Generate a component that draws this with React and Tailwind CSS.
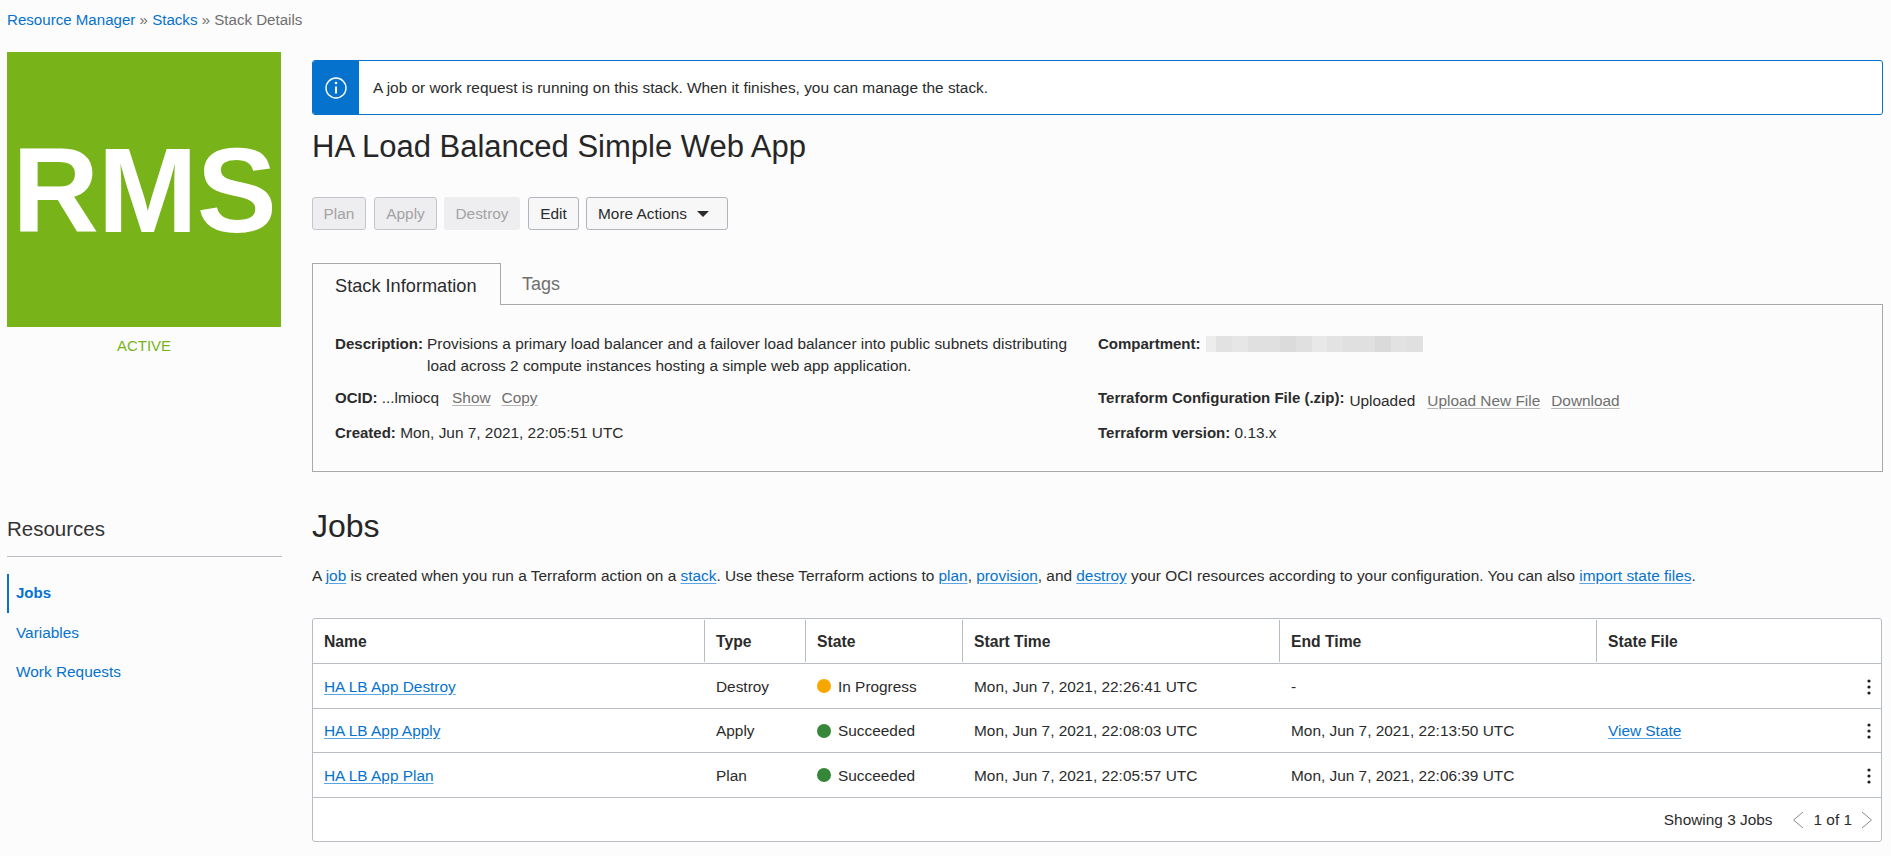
import React from 'react';

const link = 'text-[#0572ce] underline decoration-[#5aa5e4] underline-offset-2';
const muted = 'text-[#6f6f6f] underline decoration-[#b5b5b5] underline-offset-2';

const redacted = [
  'w-[10px] bg-[#ededed]', 'w-[16px] bg-[#e2e2e2]', 'w-[16px] bg-[#e6e6e6]', 'w-[16px] bg-[#e0e0e0]',
  'w-[16px] bg-[#e0e0e0]', 'w-[16px] bg-[#dbdbdb]', 'w-[16px] bg-[#e0e0e0]', 'w-[15px] bg-[#e8e8e8]',
  'w-[16px] bg-[#e3e3e3]', 'w-[16px] bg-[#e0e0e0]', 'w-[16px] bg-[#e0e0e0]', 'w-[16px] bg-[#dadada]',
  'w-[16px] bg-[#e2e2e2]', 'w-[16px] bg-[#e0e0e0]',
];

const jobs = [
  { name: 'HA LB App Destroy', type: 'Destroy', state: 'In Progress', dot: 'bg-[#f7a600]', start: 'Mon, Jun 7, 2021, 22:26:41 UTC', end: '-', h: 'h-[45px]' },
  { name: 'HA LB App Apply', type: 'Apply', state: 'Succeeded', dot: 'bg-[#36873a]', start: 'Mon, Jun 7, 2021, 22:08:03 UTC', end: 'Mon, Jun 7, 2021, 22:13:50 UTC', file: 'View State', h: 'h-[44px]' },
  { name: 'HA LB App Plan', type: 'Plan', state: 'Succeeded', dot: 'bg-[#36873a]', start: 'Mon, Jun 7, 2021, 22:05:57 UTC', end: 'Mon, Jun 7, 2021, 22:06:39 UTC', h: 'h-[45px]' },
];

const Kebab = () => (
  <svg width="4" height="16" viewBox="0 0 4 16" className="fill-[#1f1f1f]">
    <circle cx="2" cy="2" r="1.6" />
    <circle cx="2" cy="8" r="1.6" />
    <circle cx="2" cy="14" r="1.6" />
  </svg>
);

const Th = ({ children, first }) => (
  <th className="p-0 text-left font-bold text-[15.7px] align-middle">
    <div className={`h-[42px] flex items-center pl-[11px] pt-[3px] ${first ? '' : 'border-l border-[#b8bcc4]'}`}>{children}</div>
  </th>
);

export default function App() {
  return (
    <div className="min-h-[856px] bg-[#fcfcfc] text-[15.4px] text-[#2b2b2b] font-['Liberation_Sans',Arial,sans-serif] overflow-hidden">
      {/* breadcrumb */}
      <div className="h-[52px] pl-[7px] pt-[12px] leading-[16px] text-[15.1px] text-[#6f6f6f]">
        <span className="text-[#0572ce]">Resource Manager</span> » <span className="text-[#0572ce]">Stacks</span> » Stack Details
      </div>

      <div className="flex">
        {/* left column */}
        <div className="w-[312px] shrink-0 pl-[7px]">
          <div className="w-[274px] h-[275px] bg-[#77b319] flex items-center justify-center text-white font-bold text-[120px] leading-none tracking-[-1px]">RMS</div>
          <div className="w-[274px] text-center text-[#76b41a] text-[15px] mt-[11px] leading-[16px]">ACTIVE</div>

          <div className="mt-[163px] text-[20.5px] leading-[24px] text-[#333]">Resources</div>
          <div className="mt-[15px] h-px w-[275px] bg-[#b8bcc4]"></div>
          <div className="mt-[17px]">
            <div className="h-[39px] border-l-2 border-[#0572ce] pl-[7px] flex items-center font-bold text-[15px] text-[#0572ce]">Jobs</div>
            <div className="h-[40px] pl-[9px] flex items-center text-[#0572ce]">Variables</div>
            <div className="h-[38px] pl-[9px] flex items-center text-[#0572ce]">Work Requests</div>
          </div>
        </div>

        {/* main column */}
        <div className="w-[1571px] shrink-0">
          <div className="mt-[8px] h-[55px] flex border border-[#0572ce] rounded-[3px] bg-white">
            <div className="w-[46px] bg-[#0572ce] flex items-center justify-center rounded-l-[2px]">
              <svg width="22" height="22" viewBox="0 0 22 22" fill="none" stroke="white" strokeWidth="1.4">
                <circle cx="11" cy="11" r="10" />
                <path d="M11 9.5V16.5" strokeWidth="2" />
                <circle cx="11" cy="6" r="1.3" fill="white" stroke="none" />
              </svg>
            </div>
            <div className="flex items-center pl-[14px]">A job or work request is running on this stack. When it finishes, you can manage the stack.</div>
          </div>

          <h1 className="mt-[15px] text-[31px] leading-[34px] text-[#262626]">HA Load Balanced Simple Web App</h1>

          <div className="mt-[33px] flex items-center">
            <button className="h-[33px] w-[54px] pt-px rounded-[3px] border border-[#c2c5cb] bg-[#eeeef0] text-[#a3a3a3]">Plan</button>
            <button className="ml-[8px] h-[33px] w-[63px] pt-px rounded-[3px] border border-[#c2c5cb] bg-[#eeeef0] text-[#a3a3a3]">Apply</button>
            <button className="ml-[7px] h-[33px] w-[76px] pt-px rounded-[3px] bg-[#eeeef0] text-[#a3a3a3]">Destroy</button>
            <button className="ml-[8px] h-[33px] w-[51px] pt-px rounded-[3px] border border-[#b0b4bc] bg-[#f7f7f8] text-[#2b2b2b]">Edit</button>
            <button className="ml-[7px] h-[33px] w-[142px] pt-px pl-[11px] rounded-[3px] border border-[#b0b4bc] bg-[#f7f7f8] text-[#2b2b2b] flex items-center gap-[10px]">
              More Actions
              <span className="w-0 h-0 border-x-[6px] border-x-transparent border-t-[6px] border-t-[#2b2b2b]"></span>
            </button>
          </div>

          {/* tabs */}
          <div className="mt-[33px] flex items-end h-[41px]">
            <div className="w-[189px] h-[42px] border border-b-0 border-[#a8a8a8] bg-[#fcfcfc] flex items-center pl-[22px] pt-[5px] text-[18.2px] text-[#2b2b2b] relative z-10 top-px">Stack Information</div>
            <div className="pl-[21px] h-[41px] flex items-start pt-[8px] text-[18px] text-[#6f6f6f]">Tags</div>
          </div>
          <div className="w-[1571px] h-[168px] border border-[#a8a8a8] pl-[22px] pt-[28px] grid grid-cols-[763px_1fr] leading-[22px]">
            <div>
              <div className="flex">
                <b className="shrink-0 mr-[4px] text-[15.1px]">Description:</b>
                <span className="w-[650px]">Provisions a primary load balancer and a failover load balancer into public subnets distributing load across 2 compute instances hosting a simple web app application.</span>
              </div>
              <div className="mt-[10px]"><b className="text-[15px]">OCID:</b> ...lmiocq<a className={`ml-[13px] ${muted}`}>Show</a><a className={`ml-[11px] ${muted}`}>Copy</a></div>
              <div className="mt-[13px]"><b className="text-[15px]">Created:</b> Mon, Jun 7, 2021, 22:05:51 UTC</div>
            </div>
            <div>
              <div className="flex items-center h-[22px]">
                <b className="mr-[5px] text-[15px]">Compartment:</b>
                <div className="flex h-[16px]">
                  {redacted.map((c, i) => <div key={i} className={c}></div>)}
                </div>
              </div>
              <div className="mt-[32px] h-[22px] flex items-start">
                <b className="mr-[5px] text-[15px]">Terraform Configuration File (.zip):</b>
                <span className="mt-[3px]">Uploaded</span>
                <a className={`mt-[3px] ml-[12px] ${muted}`}>Upload New File</a>
                <a className={`mt-[3px] ml-[11px] ${muted}`}>Download</a>
              </div>
              <div className="mt-[13px]"><b className="text-[15px]">Terraform version:</b> 0.13.x</div>
            </div>
          </div>

          {/* jobs */}
          <h2 className="mt-[35px] text-[32px] leading-[38px] text-[#262626]">Jobs</h2>
          <p className="mt-[21px] leading-[20px] text-[#2b2b2b]">
            A <a className={link}>job</a> is created when you run a Terraform action on a <a className={link}>stack</a>. Use these Terraform actions to <a className={link}>plan</a>, <a className={link}>provision</a>, and <a className={link}>destroy</a> your OCI resources according to your configuration. You can also <a className={link}>import state files</a>.
          </p>

          <div className="mt-[32px] w-[1570px] border border-[#b8bcc4] rounded-[3px] bg-white">
            <table className="w-full table-fixed border-collapse">
              <colgroup>
                <col className="w-[391px]" />
                <col className="w-[101px]" />
                <col className="w-[157px]" />
                <col className="w-[317px]" />
                <col className="w-[317px]" />
                <col />
              </colgroup>
              <thead>
                <tr className="h-[44px] border-b border-[#b8bcc4]">
                  <Th first>Name</Th>
                  <Th>Type</Th>
                  <Th>State</Th>
                  <Th>Start Time</Th>
                  <Th>End Time</Th>
                  <Th>State File</Th>
                </tr>
              </thead>
              <tbody>
                {jobs.map(j => (
                  <tr key={j.name} className={`${j.h} border-b border-[#b8bcc4]`}>
                    <td className="pl-[11px] pt-[2px]"><a className={link}>{j.name}</a></td>
                    <td className="pl-[12px] pt-[2px]">{j.type}</td>
                    <td className="pl-[12px] pt-[2px]">
                      <span className="flex items-center gap-[7px]"><span className={`w-[14px] h-[14px] rounded-full ${j.dot}`}></span>{j.state}</span>
                    </td>
                    <td className="pl-[12px] pt-[2px]">{j.start}</td>
                    <td className="pl-[12px] pt-[2px]">{j.end}</td>
                    <td className="pl-[12px] pt-[2px]">
                      <div className="flex items-center justify-between pr-[10px]">
                        {j.file ? <a className={link}>{j.file}</a> : <span></span>}
                        <Kebab />
                      </div>
                    </td>
                  </tr>
                ))}
              </tbody>
            </table>
            <div className="h-[43px] pt-[2px] flex items-center justify-end pr-[8px] text-[#2b2b2b]">
              <span>Showing 3 Jobs</span>
              <svg width="12" height="18" viewBox="0 0 12 18" fill="none" stroke="#8a8a8a" className="ml-[20px]"><path d="M11 1L1.5 9L11 17" /></svg>
              <span className="ml-[9px]">1 of 1</span>
              <svg width="12" height="18" viewBox="0 0 12 18" fill="none" stroke="#8a8a8a" className="ml-[9px]"><path d="M1 1L10.5 9L1 17" /></svg>
            </div>
          </div>
        </div>
      </div>
    </div>
  );
}
